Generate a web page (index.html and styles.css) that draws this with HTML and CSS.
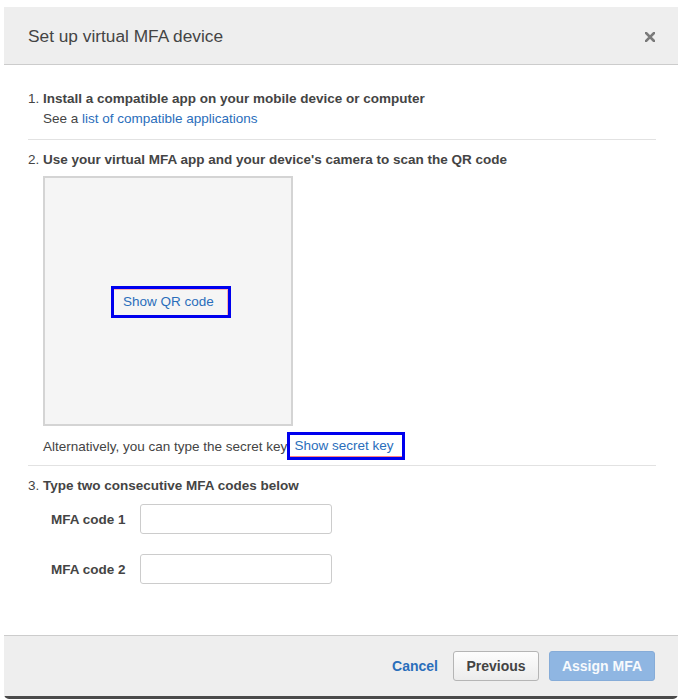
FILE: index.html
```html
<!DOCTYPE html>
<html>
<head>
<meta charset="utf-8">
<link rel="stylesheet" href="styles.css">
</head>
<body>
<div class="dialog">
  <div class="header">
    <div class="title">Set up virtual MFA device</div>
    <svg class="close" width="10" height="10" viewBox="0 0 10 10"><path d="M1 1 L9 9 M9 1 L1 9" stroke="#7a7a7a" stroke-width="2.6" stroke-linecap="square"/></svg>
  </div>
  <div class="body">
    <div class="step step1">
      <div class="line"><span class="num">1.</span><b>Install a compatible app on your mobile device or computer</b></div>
      <div class="line indent">See a <a class="link">list of compatible applications</a></div>
    </div>
    <div class="step step2">
      <div class="line"><span class="num">2.</span><b>Use your virtual MFA app and your device's camera to scan the QR code</b></div>
      <div class="qr">
        <a class="link mark mark-qr">Show QR code</a>
      </div>
      <div class="alt">Alternatively, you can type the secret key<a class="link mark mark-key">Show secret key</a></div>
    </div>
    <div class="step step3">
      <div class="line"><span class="num">3.</span><b>Type two consecutive MFA codes below</b></div>
      <div class="fields">
        <label class="field"><span class="lbl">MFA code 1</span><input class="input" type="text"></label>
        <label class="field"><span class="lbl">MFA code 2</span><input class="input" type="text"></label>
      </div>
    </div>
  </div>
  <div class="footer">
    <button class="btn cancel">Cancel</button>
    <button class="btn prev">Previous</button>
    <button class="btn assign">Assign MFA</button>
  </div>
</div>
</body>
</html>
```
FILE: styles.css
```css
html, body {
  margin: 0;
  padding: 0;
  background: #ffffff;
}
body {
  font-family: "Liberation Sans", Arial, sans-serif;
  font-size: 13.5px;
  color: #444444;
}
.dialog {
  margin: 7px 3px 0 4px;
  height: 692px;
  display: flex;
  flex-direction: column;
  background: #ffffff;
  border-radius: 0 0 5px 5px;
  overflow: hidden;
}
.header {
  flex: none;
  background: #eeeeee;
  border-bottom: 1px solid #cccccc;
  display: flex;
  align-items: center;
  padding: 2px 23px 0 24px;
  box-sizing: border-box;
  height: 58px;
}
.title {
  flex: 1;
  font-size: 17.3px;
  color: #444444;
}
.close {
  display: block;
}
.body {
  flex: 1;
  padding: 24px 22px 0 24px;
}
.step {
  border-bottom: 1px solid #e2e2e2;
}
.step1 { padding-bottom: 10px; }
.step2 { padding: 10px 0 5px; }
.step3 { padding-top: 10px; border-bottom: none; }
.line {
  line-height: 20px;
  white-space: nowrap;
}
.num {
  display: inline-block;
  width: 15px;
}
b { font-weight: bold; }
.indent { padding-left: 15px; }
.link {
  color: #2a6ebb;
  text-decoration: none;
}
.qr {
  margin: 6px 0 0 15px;
  width: 246px;
  height: 246px;
  border: 2px solid #d4d4d4;
  background: #f5f5f5;
  display: flex;
  align-items: center;
  justify-content: center;
}
.mark {
  border: 3px solid #0000ee;
  box-shadow: inset -1px 1px 0 0 #ffb0b0;
}
.mark-qr {
  display: block;
  box-sizing: content-box;
  width: 102px;
  height: 26px;
  padding: 0 3px 0 9px;
  line-height: 26px;
  margin: 1px 0 0 6px;
}
.alt {
  margin-top: 6px;
  padding-left: 15px;
  height: 28px;
  display: flex;
  align-items: center;
  white-space: nowrap;
}
.mark-key {
  display: block;
  box-sizing: border-box;
  height: 28px;
  line-height: 22px;
  padding: 0 9px 0 4px;
  margin-left: 0;
  box-shadow: inset 0 -1px 0 0 #ff8080;
}
.fields {
  display: flex;
  flex-direction: column;
  gap: 20px;
  margin-top: 8px;
  padding-left: 23px;
}
.field {
  display: flex;
  align-items: center;
}
.lbl {
  width: 89px;
  font-weight: bold;
}
.input {
  width: 190px;
  height: 28px;
  box-sizing: content-box;
  padding: 0;
  border: 1px solid #cccccc;
  border-radius: 3px;
  background: #ffffff;
  outline: none;
}
.footer {
  flex: none;
  height: 60px;
  border-top: 1px solid #cccccc;
  border-bottom: 3px solid #4a4a4a;
  background: #eeeeee;
  display: flex;
  align-items: center;
  justify-content: flex-end;
  gap: 10px;
  padding-right: 23px;
}
.btn {
  font-family: "Liberation Sans", Arial, sans-serif;
  font-size: 14px;
  font-weight: bold;
  height: 30px;
  padding: 0;
  border-radius: 3px;
  cursor: pointer;
}
.cancel {
  border: none;
  background: transparent;
  color: #2a6ebb;
  margin-right: 5px;
}
.prev {
  width: 86px;
  border: 1px solid #b5b5b5;
  background: linear-gradient(#fdfdfd, #ececec);
  color: #444444;
}
.assign {
  width: 106px;
  border: 1px solid #86acd8;
  background: #8fb6e2;
  color: #f7fafd;
}
```
